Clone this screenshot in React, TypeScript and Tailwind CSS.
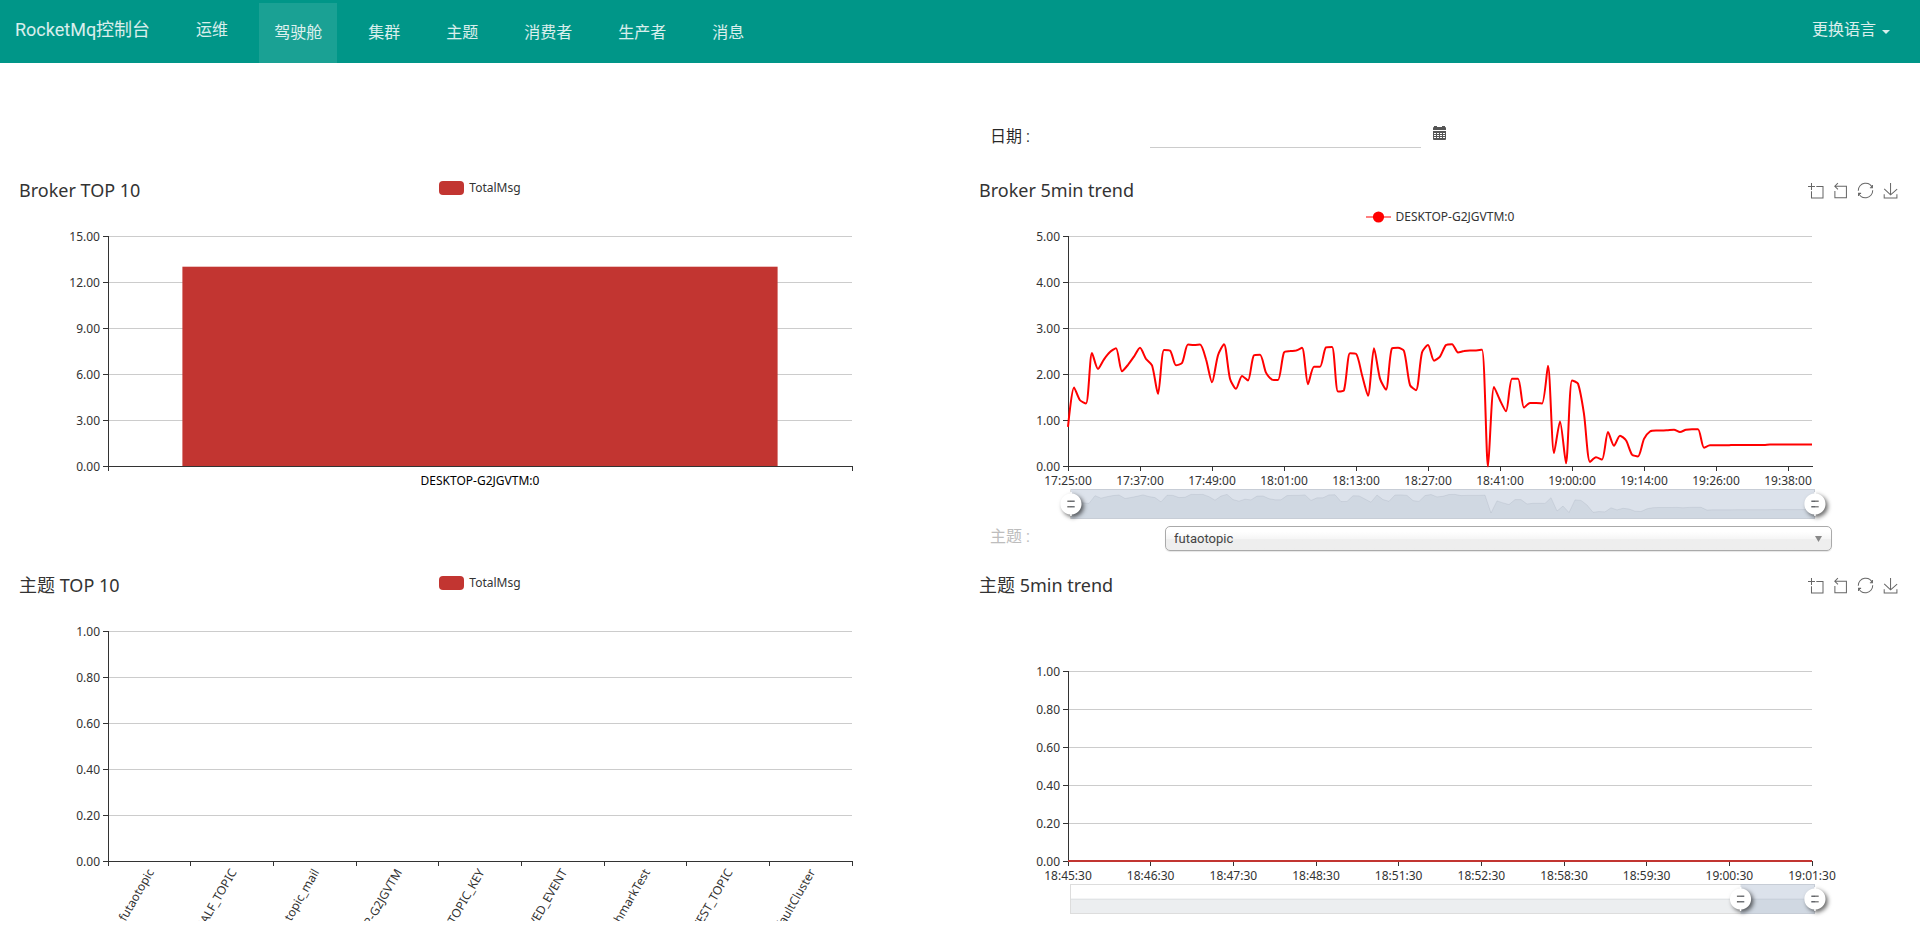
import { useState } from "react";
import type { ReactNode } from "react";

const LEFT = 93;
const RIGHT = 837;
const BASE = 242;
const ZOOM_LEFT = 96;
const ZOOM_TOP = 265;

const brokerTrend: number[] = [
  0.86, 1.72, 1.44, 1.37, 2.47, 2.12, 2.33, 2.49, 2.57, 2.07, 2.21, 2.39, 2.58, 2.34, 2.2, 1.58,
  2.53, 2.52, 2.2, 2.25, 2.65, 2.64, 2.65, 2.33, 1.83, 2.42, 2.66, 1.91, 1.69, 1.97, 1.87, 2.42,
  2.43, 2.04, 1.89, 1.88, 2.48, 2.51, 2.52, 2.58, 1.79, 2.17, 2.17, 2.59, 2.6, 1.63, 1.66, 2.46,
  2.45, 1.99, 1.54, 2.57, 1.91, 1.67, 2.57, 2.58, 2.51, 1.77, 1.66, 2.48, 2.64, 2.3, 2.39, 2.64,
  2.66, 2.48, 2.51, 2.52, 2.52, 2.54, 0, 1.73, 1.44, 1.2, 1.91, 1.91, 1.28, 1.38, 1.38, 1.37,
  2.19, 0.29, 0.98, 0.07, 1.87, 1.8, 1.14, 0.1, 0.2, 0.15, 0.75, 0.45, 0.67, 0.57, 0.26, 0.22,
  0.6, 0.76, 0.78, 0.78, 0.79, 0.8, 0.75, 0.8, 0.81, 0.81, 0.41, 0.46, 0.46, 0.46, 0.46, 0.47,
  0.47, 0.47, 0.47, 0.47, 0.47, 0.48, 0.48, 0.48, 0.48, 0.48, 0.48, 0.48, 0.48,
];

const topics = [
  "futaotopic",
  "RMQ_SYS_TRANS_HALF_TOPIC",
  "topic_mail",
  "DESKTOP-G2JGVTM",
  "AUTO_CREATE_TOPIC_KEY",
  "OFFSET_MOVED_EVENT",
  "BenchmarkTest",
  "SELF_TEST_TOPIC",
  "DefaultCluster",
];

const brokerTimes = [
  "17:25:00", "17:37:00", "17:49:00", "18:01:00", "18:13:00", "18:27:00",
  "18:41:00", "19:00:00", "19:14:00", "19:26:00", "19:38:00",
];

const topicTimes = [
  "18:45:30", "18:46:30", "18:47:30", "18:48:30", "18:51:30",
  "18:52:30", "18:58:30", "18:59:30", "19:00:30", "19:01:30",
];

type Point = [number, number];

const clamp = (v: number, a: number, b: number) =>
  Math.max(Math.min(a, b), Math.min(Math.max(a, b), v));

/* Cubic curve through every point, with control points kept inside each segment. */
function smoothPath(points: Point[]): string {
  const n = points.length;
  let d = `M${points[0][0]},${points[0][1]}`;
  let out: Point = points[0];
  for (let i = 1; i < n; i++) {
    const prev = points[i - 1];
    const p = points[i];
    const next = points[i + 1];
    let inC: Point = p;
    let nextOut: Point = p;
    if (next) {
      const lenPrev = Math.hypot(p[0] - prev[0], p[1] - prev[1]);
      const lenNext = Math.hypot(next[0] - p[0], next[1] - p[1]);
      const ratio = lenNext / (lenNext + lenPrev);
      const a: number[] = [];
      const b: number[] = [];
      for (let k = 0; k < 2; k++) {
        const v = next[k] - prev[k];
        const c1 = clamp(p[k] + v * 0.25 * ratio, next[k], p[k]);
        const c0 = clamp(p[k] - ((c1 - p[k]) * lenPrev) / lenNext, prev[k], p[k]);
        a.push(c0);
        b.push(p[k] + ((p[k] - c0) * lenNext) / lenPrev);
      }
      inC = [a[0], a[1]];
      nextOut = [b[0], b[1]];
    }
    d += `C${out[0].toFixed(2)},${out[1].toFixed(2)} ${inC[0].toFixed(2)},${inC[1].toFixed(2)} ${p[0]},${p[1].toFixed(2)}`;
    out = nextOut;
  }
  return d;
}

function Axes({
  top,
  max,
  step,
  ticks,
}: {
  top: number;
  max: number;
  step: number;
  ticks: number[];
}) {
  const count = Math.round(max / step);
  const rows = Array.from({ length: count + 1 }, (_, i) => ({
    y: BASE - ((BASE - top) * i) / count,
    label: (step * i).toFixed(2),
  }));
  return (
    <g>
      <g shapeRendering="crispEdges" strokeWidth="1">
        {rows.slice(1).map((r) => (
          <line key={r.label} x1={LEFT} x2={RIGHT} y1={r.y + 0.5} y2={r.y + 0.5} stroke="#ccc" />
        ))}
        {rows.map((r) => (
          <line key={r.label} x1={LEFT - 5} x2={LEFT} y1={r.y + 0.5} y2={r.y + 0.5} stroke="#333" />
        ))}
        {ticks.map((x) => (
          <line key={x} x1={Math.floor(x) + 0.5} x2={Math.floor(x) + 0.5} y1={BASE} y2={BASE + 5} stroke="#333" />
        ))}
      </g>
      {rows.map((r) => (
        <text key={r.label} x={LEFT - 8} y={r.y + 5} textAnchor="end">
          {r.label}
        </text>
      ))}
    </g>
  );
}

function AxisLines({ top }: { top: number }) {
  return (
    <g shapeRendering="crispEdges" stroke="#333" strokeWidth="1">
      <line x1={LEFT + 0.5} x2={LEFT + 0.5} y1={top} y2={BASE + 1} />
      <line x1={LEFT} x2={RIGHT + 1} y1={BASE + 0.5} y2={BASE + 0.5} />
    </g>
  );
}

function Plot({ label, children }: { label: string; children: ReactNode }) {
  return (
    <svg
      viewBox="0 0 930 302"
      role="img"
      aria-label={label}
      className="block h-auto w-full overflow-hidden fill-[#333] text-[12px]"
    >
      {children}
    </svg>
  );
}

function Handle({ x }: { x: number }) {
  return (
    <g
      transform={`translate(${x} ${ZOOM_TOP + 15}) scale(1.12) translate(-10 -21.3)`}
      className="fill-white drop-shadow-[2px_2px_2px_rgba(0,0,0,0.6)]"
    >
      <path d="M10.7,11.9v-1.3H9.3v1.3c-4.9,0.3-8.8,4.4-8.8,9.4c0,5,3.9,9.1,8.8,9.4v1.3h1.3v-1.3c4.9-0.3,8.8-4.4,8.8-9.4C19.5,16.3,15.6,12.2,10.7,11.9z M13.3,24.4H6.7V23h6.6V24.4z M13.3,19.6H6.7v-1.4h6.6V19.6z" />
    </g>
  );
}

function ZoomBar({ values, from, to }: { values: number[]; from: number; to: number }) {
  const width = RIGHT - LEFT;
  const base = ZOOM_TOP + (values.some((v) => v > 0) ? 24 : 15);
  const pts = values.map(
    (v, i) => `${(ZOOM_LEFT + (width * i) / (values.length - 1)).toFixed(1)},${(base - v * 7).toFixed(1)}`,
  );
  const x0 = ZOOM_LEFT + width * from;
  const x1 = ZOOM_LEFT + width * to;
  return (
    <g>
      <polygon
        points={`${ZOOM_LEFT},${ZOOM_TOP + 30} ${pts.join(" ")} ${ZOOM_LEFT + width},${ZOOM_TOP + 30}`}
        fill="#2f4554"
        fillOpacity="0.09"
      />
      <polyline points={pts.join(" ")} fill="none" stroke="#2f4554" strokeOpacity="0.12" strokeWidth="1" />
      <rect
        x={ZOOM_LEFT - 0.5}
        y={ZOOM_TOP + 0.5}
        width={width}
        height="29"
        fill="none"
        stroke="#ddd"
        shapeRendering="crispEdges"
      />
      <rect x={x0} y={ZOOM_TOP} width={x1 - x0} height="30" fill="#a7b7cc" fillOpacity="0.4" />
      <Handle x={x0} />
      <Handle x={x1} />
    </g>
  );
}

function ZoomInputs({
  name,
  from,
  to,
  onFrom,
  onTo,
}: {
  name: string;
  from: number;
  to: number;
  onFrom: (v: number) => void;
  onTo: (v: number) => void;
}) {
  return (
    <div className="absolute inset-x-[10%] bottom-2 flex h-8">
      <input
        type="range"
        aria-label={`${name} start`}
        className="w-1/2 opacity-0"
        min={0}
        max={1}
        step={0.01}
        value={from}
        onChange={(e) => onFrom(Math.min(Number(e.target.value), to))}
      />
      <input
        type="range"
        aria-label={`${name} end`}
        className="w-1/2 opacity-0"
        min={0}
        max={1}
        step={0.01}
        value={to}
        onChange={(e) => onTo(Math.max(Number(e.target.value), from))}
      />
    </div>
  );
}

const tools = [
  { name: "Zoom", box: "0 0 58 58", d: "M0,13.5h26.9 M13.5,26.9V0 M32.1,13.5H58V58H13.5 V32.1" },
  { name: "Zoom reset", box: "3 1 58 58", d: "M22,1.4L9.9,13.5l12.3,12.3 M10.3,13.5H54.9v44.6 H10.3v-26" },
  {
    name: "Restore",
    box: "1 1 58 58",
    d: "M47,18.9h9.8V8.7 M56.3,20.1 C52.1,9,40.5,0.6,26.8,2.1C12.6,3.7,1.6,16.2,2.1,30.6 M13,41.1H3.1v10.2 M3.7,39.9c4.2,11.1,15.8,19.5,29.5,18 c14.2-1.6,25.2-14.1,24.7-28.5",
  },
  {
    name: "Save as image",
    box: "0 0 58 58",
    d: "M4.7,22.9L29.3,45.5L54.7,23.4M4.6,43.6L4.6,58L53.8,58L53.8,43.6M29.2,45.1L29.2,0",
  },
];

function Toolbox() {
  return (
    <div className="flex gap-[10px] pt-[7px] pr-[7px]">
      {tools.map((t) => (
        <button key={t.name} type="button" aria-label={t.name} className="block size-[15px]">
          <svg viewBox={t.box} className="block size-[15px] overflow-visible">
            <path d={t.d} fill="none" stroke="#666" strokeWidth="3.9" />
          </svg>
        </button>
      ))}
    </div>
  );
}

function ChartPanel({
  title,
  legend,
  toolbox,
  children,
}: {
  title: string;
  legend?: ReactNode;
  toolbox?: boolean;
  children: ReactNode;
}) {
  return (
    <section className="relative font-['Noto_Sans','Noto_Sans_CJK_SC',sans-serif] text-[#333]">
      <header className="grid h-12 grid-cols-[1fr_auto_1fr] items-start">
        <h2 className="pt-[2px] pl-1 text-[18px] leading-6">{title}</h2>
        <div>{legend}</div>
        <div className="justify-self-end">{toolbox && <Toolbox />}</div>
      </header>
      {children}
    </section>
  );
}

function BarLegend() {
  return (
    <button type="button" className="flex items-center gap-[5px] pt-1 text-[12px] leading-4">
      <span className="h-[14px] w-[25px] rounded-[4px] bg-[#c23531]" />
      TotalMsg
    </button>
  );
}

function LineLegend() {
  return (
    <button type="button" className="flex items-center gap-[5px] pt-[33px] text-[12px] leading-4">
      <svg viewBox="0 0 25 14" className="h-[14px] w-[25px]">
        <path d="M0,7H25" stroke="#f00" strokeOpacity="0.5" strokeWidth="2" />
        <circle cx="12.5" cy="7" r="5.6" fill="#f00" />
      </svg>
      DESKTOP-G2JGVTM:0
    </button>
  );
}

function BrokerTop() {
  return (
    <ChartPanel title="Broker TOP 10" legend={<BarLegend />}>
      <Plot label="Broker TOP 10">
        <Axes top={12} max={15} step={3} ticks={[LEFT, RIGHT]} />
        <rect x="167.4" y="42.7" width="595.2" height="199.3" fill="#c23531" />
        <AxisLines top={12} />
        <text x="465" y="261" textAnchor="middle" fill="#000">
          DESKTOP-G2JGVTM:0
        </text>
      </Plot>
    </ChartPanel>
  );
}

function BrokerTrend() {
  const [from, setFrom] = useState(0);
  const [to, setTo] = useState(1);
  const points: Point[] = brokerTrend.map((v, i) => [LEFT + i * 6, BASE + 0.5 - v * 46]);
  return (
    <ChartPanel title="Broker 5min trend" legend={<LineLegend />} toolbox>
      <Plot label="Broker 5min trend">
        <Axes top={12} max={5} step={1} ticks={brokerTimes.map((_, i) => LEFT + i * 72)} />
        <AxisLines top={12} />
        {brokerTimes.map((t, i) => (
          <text key={t} x={LEFT + i * 72} y="261" textAnchor="middle">
            {t}
          </text>
        ))}
        <path d={smoothPath(points)} fill="none" stroke="#f00" strokeWidth="2" strokeLinejoin="bevel" />
        <ZoomBar values={brokerTrend} from={from} to={to} />
      </Plot>
      <ZoomInputs name="Broker range" from={from} to={to} onFrom={setFrom} onTo={setTo} />
    </ChartPanel>
  );
}

function TopicTop() {
  const step = (RIGHT - LEFT) / topics.length;
  return (
    <ChartPanel title="主题 TOP 10" legend={<BarLegend />}>
      <Plot label="主题 TOP 10">
        <Axes top={12} max={1} step={0.2} ticks={[...topics.map((_, i) => LEFT + i * step), RIGHT]} />
        <AxisLines top={12} />
        {topics.map((t, i) => (
          <text
            key={t}
            transform={`translate(${LEFT + (i + 0.5) * step + 5} 253) rotate(-60)`}
            textAnchor="end"
          >
            {t}
          </text>
        ))}
      </Plot>
    </ChartPanel>
  );
}

function TopicTrend() {
  const [from, setFrom] = useState(0.9);
  const [to, setTo] = useState(1);
  const step = (RIGHT - LEFT) / 9;
  return (
    <ChartPanel title="主题 5min trend" toolbox>
      <Plot label="主题 5min trend">
        <Axes top={52} max={1} step={0.2} ticks={topicTimes.map((_, i) => LEFT + i * step)} />
        <AxisLines top={52} />
        {topicTimes.map((t, i) => (
          <text key={t} x={LEFT + i * step} y="261" textAnchor="middle">
            {t}
          </text>
        ))}
        <rect x={LEFT} y={BASE - 1} width={RIGHT - LEFT} height="2" fill="#c23531" />
        <ZoomBar values={[0, 0]} from={from} to={to} />
      </Plot>
      <ZoomInputs name="Topic range" from={from} to={to} onFrom={setFrom} onTo={setTo} />
    </ChartPanel>
  );
}

const lowLinks = ["集群", "主题", "消费者", "生产者", "消息"];

function NavBar() {
  return (
    <nav className="flex h-[63px] items-start bg-[#009688] text-[16px] leading-5 text-white/85">
      <a href="#/" className="pt-5 pr-[31px] pl-[15px] text-[18px]">
        RocketMq控制台
      </a>
      <div className="flex flex-1 items-start gap-4">
        <a href="#/ops" className="px-[15px] pt-5">
          运维
        </a>
        <a href="#/" className="mt-[3px] h-[60px] bg-white/10 px-[15px] pt-5" aria-current="page">
          驾驶舱
        </a>
        {lowLinks.map((l) => (
          <a key={l} href={`#/${l}`} className="mt-[3px] px-[15px] pt-5">
            {l}
          </a>
        ))}
      </div>
      <button type="button" className="flex items-center gap-[6px] pt-5 pr-[30px]">
        更换语言
        <svg viewBox="0 0 8 4" className="mt-[3px] h-1 w-2 fill-current">
          <path d="M0,0H8L4,4z" />
        </svg>
      </button>
    </nav>
  );
}

function CalendarIcon() {
  return (
    <svg viewBox="0 0 13 14" className="block h-[14px] w-[13px] fill-[#555]">
      <path d="M0,4V2Q0,1 1,1H1V0H4V1H9V0H12V1Q13,1 13,2V4z" />
      <path
        fillRule="evenodd"
        d="M0,5H13V13Q13,14 12,14H1Q0,14 0,13z M1,7V8H3V7z M4,7V8H6V7z M7,7V8H9V7z M10,7V8H12V7z M1,9V10H3V9z M4,9V10H6V9z M7,9V10H9V9z M10,9V10H12V9z M1,11V12H3V11z M4,11V12H6V11z M7,11V12H9V11z M10,11V12H12V11z"
      />
    </svg>
  );
}

export default function App() {
  return (
    <div className="min-h-screen bg-white font-[Roboto,'Noto_Sans_CJK_SC',sans-serif]">
      <NavBar />
      <main className="grid grid-cols-2 gap-x-[30px] px-[15px] pb-4">
        <div className="col-start-2 flex items-end pt-12 pb-7">
          <label htmlFor="date" className="w-[175px] pl-[15px] text-[16px] leading-[22px] text-black/85">
            日期 :
          </label>
          <input
            id="date"
            type="text"
            className="h-[37px] w-[271px] border-b border-[#ccc] bg-transparent text-[16px] outline-none"
          />
          <button type="button" aria-label="Pick a date" className="px-3 pb-2">
            <CalendarIcon />
          </button>
        </div>

        <div className="col-start-1">
          <BrokerTop />
        </div>
        <div>
          <BrokerTrend />
        </div>

        <div className="col-start-2 flex h-[45px] items-start">
          <label htmlFor="topic" className="w-[190px] pl-[15px] text-[16px] leading-[22px] text-[#bdbdbd]">
            主题 :
          </label>
          <div className="relative mr-[73px] flex-1">
            <select
              id="topic"
              defaultValue="futaotopic"
              className="block h-[25px] w-full appearance-none rounded-[5px] border border-[#aaa] bg-linear-to-b from-white from-20% via-[#f6f6f6] via-50% to-[#eee] to-55% px-2 text-[13px] text-[#444] shadow-[0_1px_1px_rgba(0,0,0,0.1)] outline-none"
            >
              {topics.map((t) => (
                <option key={t}>{t}</option>
              ))}
            </select>
            <svg viewBox="0 0 7 6" className="pointer-events-none absolute top-[10px] right-[10px] h-[6px] w-[7px] fill-[#888]">
              <path d="M0,0H7L3.5,6z" />
            </svg>
          </div>
        </div>

        <div className="col-start-1">
          <TopicTop />
        </div>
        <div>
          <TopicTrend />
        </div>
      </main>
    </div>
  );
}
